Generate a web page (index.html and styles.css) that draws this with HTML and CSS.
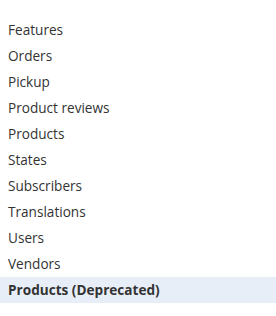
FILE: index.html
```html
<!DOCTYPE html>
<html lang="en">

<head>
  <meta charset="UTF-8">
  <title>Menu</title>
  <link rel="stylesheet" href="styles.css">
</head>

<body>
  <ul class="menu">
    <li class="menu-item">Features</li>
    <li class="menu-item">Orders</li>
    <li class="menu-item">Pickup</li>
    <li class="menu-item">Product reviews</li>
    <li class="menu-item">Products</li>
    <li class="menu-item">States</li>
    <li class="menu-item">Subscribers</li>
    <li class="menu-item">Translations</li>
    <li class="menu-item">Users</li>
    <li class="menu-item">Vendors</li>
    <li class="menu-item active">Products (Deprecated)</li>
  </ul>
</body>

</html>
```

FILE: styles.css
```css
body {
  margin: 0;
  padding: 0;
  background-color: #fff;
  font-family: 'Open Sans', sans-serif;
  font-size: 13.6px;
  color: #333;
}

.menu {
  list-style: none;
  margin: 0;
  padding: 17px 0 0;
}

.menu-item {
  height: 26px;
  line-height: 26px;
  padding: 0 8px;
}

.menu-item.active {
  background-color: #e8eef8;
  font-weight: bold;
}
```
